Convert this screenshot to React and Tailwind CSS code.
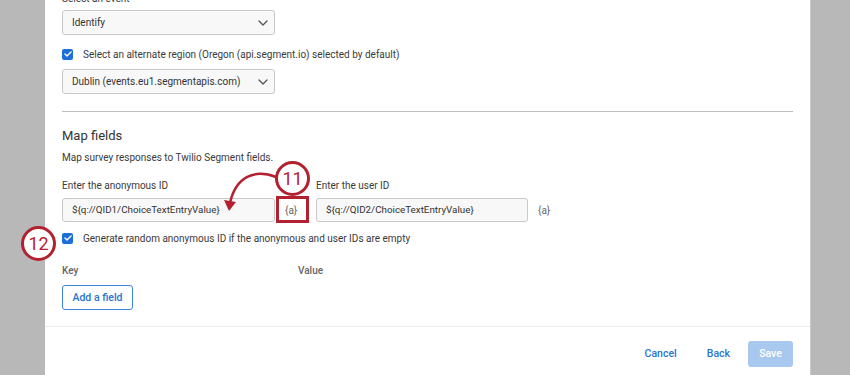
import React from 'react';

const font = { fontFamily: 'Roboto, "Liberation Sans", Arial, sans-serif' };

const Chevron = () => (
  <svg width="10" height="6" viewBox="0 0 10 6" className="text-[#555]">
    <path d="M1 1l4 4 4-4" fill="none" stroke="currentColor" strokeWidth="1.3" strokeLinecap="round" strokeLinejoin="round" />
  </svg>
);

const Select = ({ value }) => (
  <div className="flex h-[25px] w-[213px] items-center justify-between rounded-[3px] border border-[#c9c9c9] bg-[#f8f8f8] pl-[9px] pr-[6px] text-[10px] text-[#333]">
    <span>{value}</span>
    <Chevron />
  </div>
);

const Check = ({ label }) => (
  <div className="flex h-[14px] items-center gap-[10px] text-[10px] text-[#3a3a3a]">
    <span className="flex h-[11px] w-[11px] items-center justify-center rounded-[2px] bg-[#1b6fd8]">
      <svg width="8" height="6" viewBox="0 0 8 6">
        <path d="M1 3l2 2 4-4" fill="none" stroke="white" strokeWidth="1.4" strokeLinecap="round" strokeLinejoin="round" />
      </svg>
    </span>
    <span>{label}</span>
  </div>
);

const TextInput = ({ value, w }) => (
  <div className={`flex h-[24px] items-center rounded-[3px] border border-[#c9c9c9] bg-[#f8f8f8] pl-[9px] text-[9.8px] text-[#333] ${w}`}>
    {value}
  </div>
);

const Marker = ({ n, className }) => (
  <div className={`absolute flex h-[35px] w-[35px] items-center justify-center rounded-full border-[3px] border-[#b3202f] bg-white text-[18px] text-[#b3202f] ${className}`}>
    {n}
  </div>
);

export default function App() {
  return (
    <div className="relative flex h-[375px] w-[850px] overflow-hidden bg-[#b8b8b8]" style={font}>
      <div className="w-[45px] shrink-0" />
      <div className="flex w-[765px] shrink-0 flex-col bg-white">
        <div className="px-[17px]">
          <div className="-mt-[8px] mb-[4px] h-[14px] text-[10px] leading-[14px] text-[#3a3a3a]">Select an event</div>
          <Select value="Identify" />
          <div className="mt-[12px]">
            <Check label="Select an alternate region (Oregon (api.segment.io) selected by default)" />
          </div>
          <div className="mt-[8px]">
            <Select value="Dublin (events.eu1.segmentapis.com)" />
          </div>
          <div className="mt-[17px] h-px bg-[#bdbdbd]" />
          <div className="mt-[15px] h-[18px] text-[13px] leading-[18px] text-[#333]">Map fields</div>
          <div className="mt-[6px] h-[14px] text-[10px] leading-[14px] text-[#3a3a3a]">Map survey responses to Twilio Segment fields.</div>
          <div className="mt-[14px] flex">
            <div className="w-[254px]">
              <div className="h-[14px] text-[10px] leading-[14px] text-[#3a3a3a]">Enter the anonymous ID</div>
              <div className="mt-[5px] flex items-center">
                <TextInput value="${q://QID1/ChoiceTextEntryValue}" w="w-[213px]" />
                <span className="ml-[10px] text-[10px] text-[#666]">{'{a}'}</span>
              </div>
            </div>
            <div>
              <div className="h-[14px] text-[10px] leading-[14px] text-[#3a3a3a]">Enter the user ID</div>
              <div className="mt-[5px] flex items-center">
                <TextInput value="${q://QID2/ChoiceTextEntryValue}" w="w-[212px]" />
                <span className="ml-[10px] text-[10px] text-[#666]">{'{a}'}</span>
              </div>
            </div>
          </div>
          <div className="mt-[9px]">
            <Check label="Generate random anonymous ID if the anonymous and user IDs are empty" />
          </div>
          <div className="mt-[19px] flex h-[14px] text-[10px] font-medium leading-[14px] text-[#666]">
            <span className="w-[236px]">Key</span>
            <span>Value</span>
          </div>
          <button className="mt-[7px] flex h-[25px] w-[71px] items-center justify-center rounded-[3px] border border-[#3d85dc] text-[10.5px] font-medium text-[#2a74d0]">
            Add a field
          </button>
        </div>
        <div className="mt-[16px] h-px bg-[#ececec]" />
        <div className="flex items-center justify-end gap-[6px] pr-[17px] pt-[14px] text-[10.5px] font-medium">
          <button className="h-[26px] px-[12px] text-[#2a74d0]">Cancel</button>
          <button className="h-[26px] px-[12px] text-[#2a74d0]">Back</button>
          <button className="h-[26px] w-[45px] rounded-[3px] bg-[#a9c8ef] text-white">Save</button>
        </div>
      </div>
      <div className="w-px shrink-0 bg-[#c8c8c8]" />

      {/* annotations */}
      <div className="absolute left-[276px] top-[196px] h-[27px] w-[33px] border-[3px] border-[#b3202f]" />
      <Marker n="11" className="left-[275px] top-[161px]" />
      <Marker n="12" className="left-[21px] top-[226px]" />
      <svg className="absolute left-0 top-0" width="850" height="375">
        <path d="M276 177 C 255 169, 236 176, 230 203" fill="none" stroke="#b3202f" strokeWidth="2.5" />
        <path d="M224 200 L229 211 L236 202 Z" fill="#b3202f" />
      </svg>
    </div>
  );
}
